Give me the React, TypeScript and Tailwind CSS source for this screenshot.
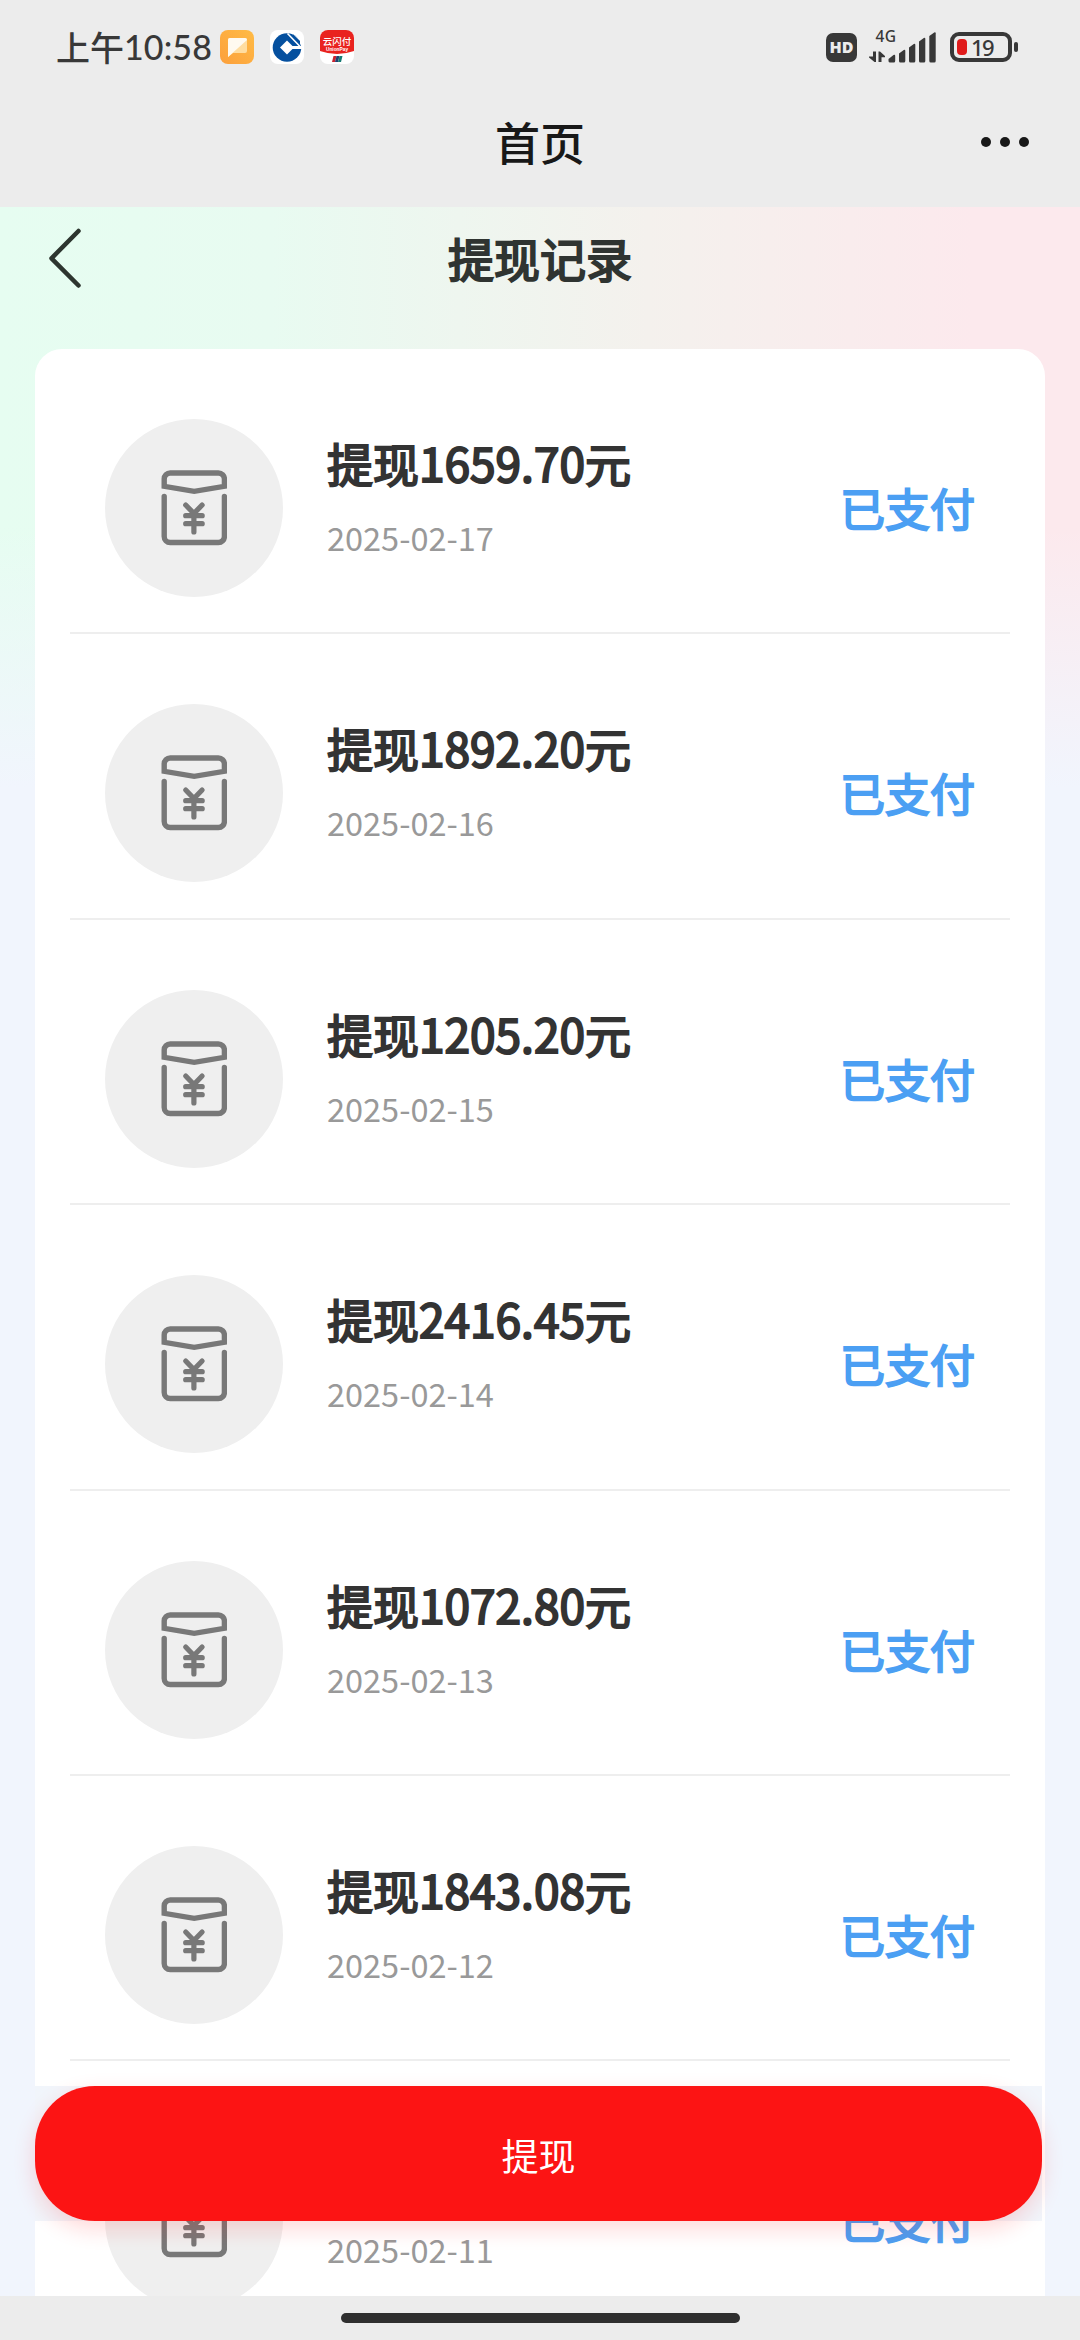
const records = [
  { amount: '1659.70', date: '2025-02-17' },
  { amount: '1892.20', date: '2025-02-16' },
  { amount: '1205.20', date: '2025-02-15' },
  { amount: '2416.45', date: '2025-02-14' },
  { amount: '1072.80', date: '2025-02-13' },
  { amount: '1843.08', date: '2025-02-12' },
  { amount: '1320.60', date: '2025-02-11' },
];

function NoteIcon() {
  return (
    <svg width="34" height="34" viewBox="0 0 34 34">
      <defs>
        <linearGradient id="note" x1="0" y1="1" x2="1" y2="0">
          <stop offset="0" stopColor="#fca03c" />
          <stop offset="1" stopColor="#ffbb45" />
        </linearGradient>
      </defs>
      <rect width="34" height="34" rx="8" fill="url(#note)" />
      <path d="M8 10a2 2 0 0 1 2-2h15a2 2 0 0 1 2 2v11a2 2 0 0 1-2 2H13l-5 4z" fill="#ffdda0" />
      <path d="M8 10a2 2 0 0 1 2-2h15a2 2 0 0 1 2 2L8 27z" fill="#fffaf0" />
    </svg>
  );
}

function BankIcon() {
  return (
    <svg width="34" height="34" viewBox="0 0 34 34">
      <rect width="34" height="34" rx="8" fill="#fff" />
      <circle cx="17" cy="17.500" r="14.300" fill="#05509f" />
      <path d="M17 10.500l7 7-7 7-7-7z" fill="#fff" />
      <path d="M20 16h14v3H22z" fill="#fff" />
      <path d="M17.500 3.500L30 16.500M22 3l8.500 9" stroke="#fff" strokeWidth="1.600" />
      <path d="M27 6l5-1v11h-1z" fill="#fff" />
      <path d="M23.500 4.500l6.500 6.500v3L21 4.500z" fill="#05509f" />
    </svg>
  );
}

function UnionPayIcon() {
  return (
    <svg width="34" height="34" viewBox="0 0 34 34">
      <rect width="34" height="34" rx="8" fill="#fff" />
      <path d="M0 8a8 8 0 0 1 8-8h18a8 8 0 0 1 8 8v13q-17 6-34 0z" fill="#e9231f" />
      <text x="17" y="14.500" textAnchor="middle" fontSize="9.500" fontWeight="500" fill="#fff" fontFamily="Noto Sans CJK SC, sans-serif">云闪付</text>
      <text x="17" y="20.500" textAnchor="middle" fontSize="4.800" fontWeight="700" fill="#fff" fontFamily="Liberation Sans, sans-serif">UnionPay</text>
      <path d="M13.500 26h3l-1.500 6h-3z" fill="#c9232f" />
      <path d="M16.500 26h3L18 32h-3z" fill="#21406f" />
      <path d="M19.500 26h3L21 32h-3z" fill="#147a72" />
    </svg>
  );
}

function SignalIcon() {
  return (
    <svg className="overflow-visible" width="68" height="34" viewBox="0 0 68 34" fill="#383838">
      <text x="6.500" y="11.800" fontSize="15.500" letterSpacing="0.500" fontFamily="Noto Sans, sans-serif" fontWeight="500">4G</text>
      <path d="M4 21.500h3V32H5.500L0 27.500V26.500h4zM9.500 21.500H11l5 4.500v1.300h-3.500V32h-3z" />
      <path d="M19.500 29l5-4a1 1 0 0 1 1.700.8V31a1.500 1.500 0 0 1-1.500 1.500h-4A1.500 1.500 0 0 1 19.500 31z" />
      <path d="M30 23.500l4.800-3.500a1 1 0 0 1 1.500.8V31a1.500 1.500 0 0 1-1.500 1.500h-3.300A1.500 1.500 0 0 1 30 31z" />
      <path d="M40 17.500l4.800-3.500a1 1 0 0 1 1.500.8V31a1.500 1.500 0 0 1-1.500 1.500h-3.300A1.500 1.500 0 0 1 40 31z" />
      <path d="M50 11.500L54.800 8a1 1 0 0 1 1.500.8V31a1.500 1.500 0 0 1-1.500 1.500h-3.300A1.500 1.500 0 0 1 50 31z" />
      <path d="M60.300 6l4.900-3.500a1 1 0 0 1 1.500.8V31a1.500 1.500 0 0 1-1.500 1.500h-3.400a1.500 1.500 0 0 1-1.500-1.500z" />
    </svg>
  );
}

function EnvelopeIcon() {
  return (
    <svg width="66" height="76" viewBox="0 0 66 76" fill="none" stroke="#787878" strokeWidth="5.400" strokeLinecap="round" strokeLinejoin="round">
      <path d="M3.200 16.300V9a6 6 0 0 1 6-6h48.200a6 6 0 0 1 6 6v7.300L33.200 21.300z" strokeLinejoin="miter" />
      <path d="M3.200 26.500v40a6 6 0 0 0 6 6h48.200a6 6 0 0 0 6-6v-40" />
      <path d="M24.700 35l8.200 8.500 8.200-8.500M32.900 44v18M24.700 45.700h16.500M24.700 53.700h16.500" strokeWidth="5.200" />
    </svg>
  );
}

function StatusBar() {
  return (
    <div className="flex h-[94px] items-center justify-between pl-14 pr-[62px] text-[#383838]">
      <div className="flex items-center">
        <div className="flex h-10 w-[164px] items-center whitespace-nowrap leading-10">
          <span className="text-[34px] font-medium">上午</span>
          <span className="font-['Lato'] text-[34px] font-medium tracking-[0.1px]">10:58</span>
        </div>
        <div className="flex gap-4">
          <NoteIcon />
          <BankIcon />
          <UnionPayIcon />
        </div>
      </div>
      <div className="flex items-center">
        <span className="mr-3 flex h-[29px] w-[31px] items-center justify-center rounded-[7px] bg-[#383838] font-['Open_Sans'] text-[16px] font-extrabold text-[#ececec]">HD</span>
        <SignalIcon />
        <div className="ml-[13px] flex h-[30px] w-[62px] items-center rounded-[9px] border-4 border-[#383838] pl-[3px]">
          <span className="h-4 w-[10px] rounded-sm bg-[#e01b1b]" />
          <span className="ml-1 font-['Noto_Sans'] text-[22px] font-medium leading-5 tracking-[-1.5px]">19</span>
        </div>
        <span className="ml-0.5 h-[10px] w-1 rounded-full bg-[#383838]" />
      </div>
    </div>
  );
}

function RecordRow({ amount, date }: { amount: string; date: string }) {
  return (
    <div className="flex h-[285.4px] shrink-0 border-b-2 border-[#eeeeee] px-[35px] pt-[70px]">
      <div className="flex size-[178px] shrink-0 items-center justify-center rounded-full bg-[#efefef]">
        <EnvelopeIcon />
      </div>
      <div className="ml-11 flex flex-1 flex-col pt-[9px]">
        <span className="text-[46px] leading-[68px] text-[#333] [-webkit-text-stroke:2px_#333]">提现{amount}元</span>
        <span className="mt-[17px] text-[32.5px] leading-[48px] text-[#999]">{date}</span>
      </div>
      <span className="mt-[55px] text-[45px] leading-[68px] text-[#4b9ff3] [-webkit-text-stroke:2px_#4b9ff3]">已支付</span>
    </div>
  );
}

export default function App() {
  return (
    <div className="relative flex h-[2340px] w-[1080px] flex-col overflow-hidden bg-[#f1f5fe] font-['Noto_Sans_CJK_SC',sans-serif]">
      <header className="h-[207px] shrink-0 bg-[#ececec]">
        <StatusBar />
        <div className="grid h-24 grid-cols-3 items-center">
          <span />
          <h1 className="text-center text-[45px] font-medium leading-[66px] text-[#181818]">首页</h1>
          <div className="flex justify-end gap-[9px] pr-[51px]">
            <span className="size-[10px] rounded-full bg-[#181818]" />
            <span className="size-[10px] rounded-full bg-[#181818]" />
            <span className="size-[10px] rounded-full bg-[#181818]" />
          </div>
        </div>
      </header>

      <main className="flex min-h-0 flex-1 flex-col overflow-hidden bg-[linear-gradient(to_bottom,transparent_320px,#f1f5fd_580px),linear-gradient(to_right,#e6fdf1_0%,#e8fbf1_25%,#f4f1ed_60%,#fce9ed_90%)]">
        <div className="grid h-[142px] shrink-0 grid-cols-3 items-start">
          <svg className="ml-12 mt-[21px]" width="34" height="60" viewBox="0 0 34 60" fill="none" stroke="#2d352f" strokeWidth="4.500" strokeLinecap="round" strokeLinejoin="round">
            <path d="M30.500 3L3.500 30.300 30.500 57.500" />
          </svg>
          <h2 className="mt-[17px] text-center text-[46px] leading-[66px] text-[#2f3431] [-webkit-text-stroke:2px_#2f3431]">提现记录</h2>
        </div>
        <section className="mx-[35px] flex min-h-0 flex-1 flex-col overflow-hidden rounded-t-[27px] bg-white px-[35px]">
          {records.map((r) => (
            <RecordRow key={r.date} amount={r.amount} date={r.date} />
          ))}
        </section>
      </main>

      <div className="absolute left-[35px] top-[2086px] h-[135px] w-[1007px] bg-[#f1f5fb]">
        <button className="h-full w-full rounded-[60px] bg-[#fc1414] pt-0.5 text-[37px] leading-[54px] text-white shadow-[0_8px_22px_rgba(252,20,20,0.16)]">提现</button>
      </div>

      <footer className="relative flex h-11 shrink-0 justify-center bg-[#ececec] pt-[17px]">
        <span className="h-[10px] w-[399px] rounded-full bg-[#2f2f2f]" />
      </footer>
    </div>
  );
}
